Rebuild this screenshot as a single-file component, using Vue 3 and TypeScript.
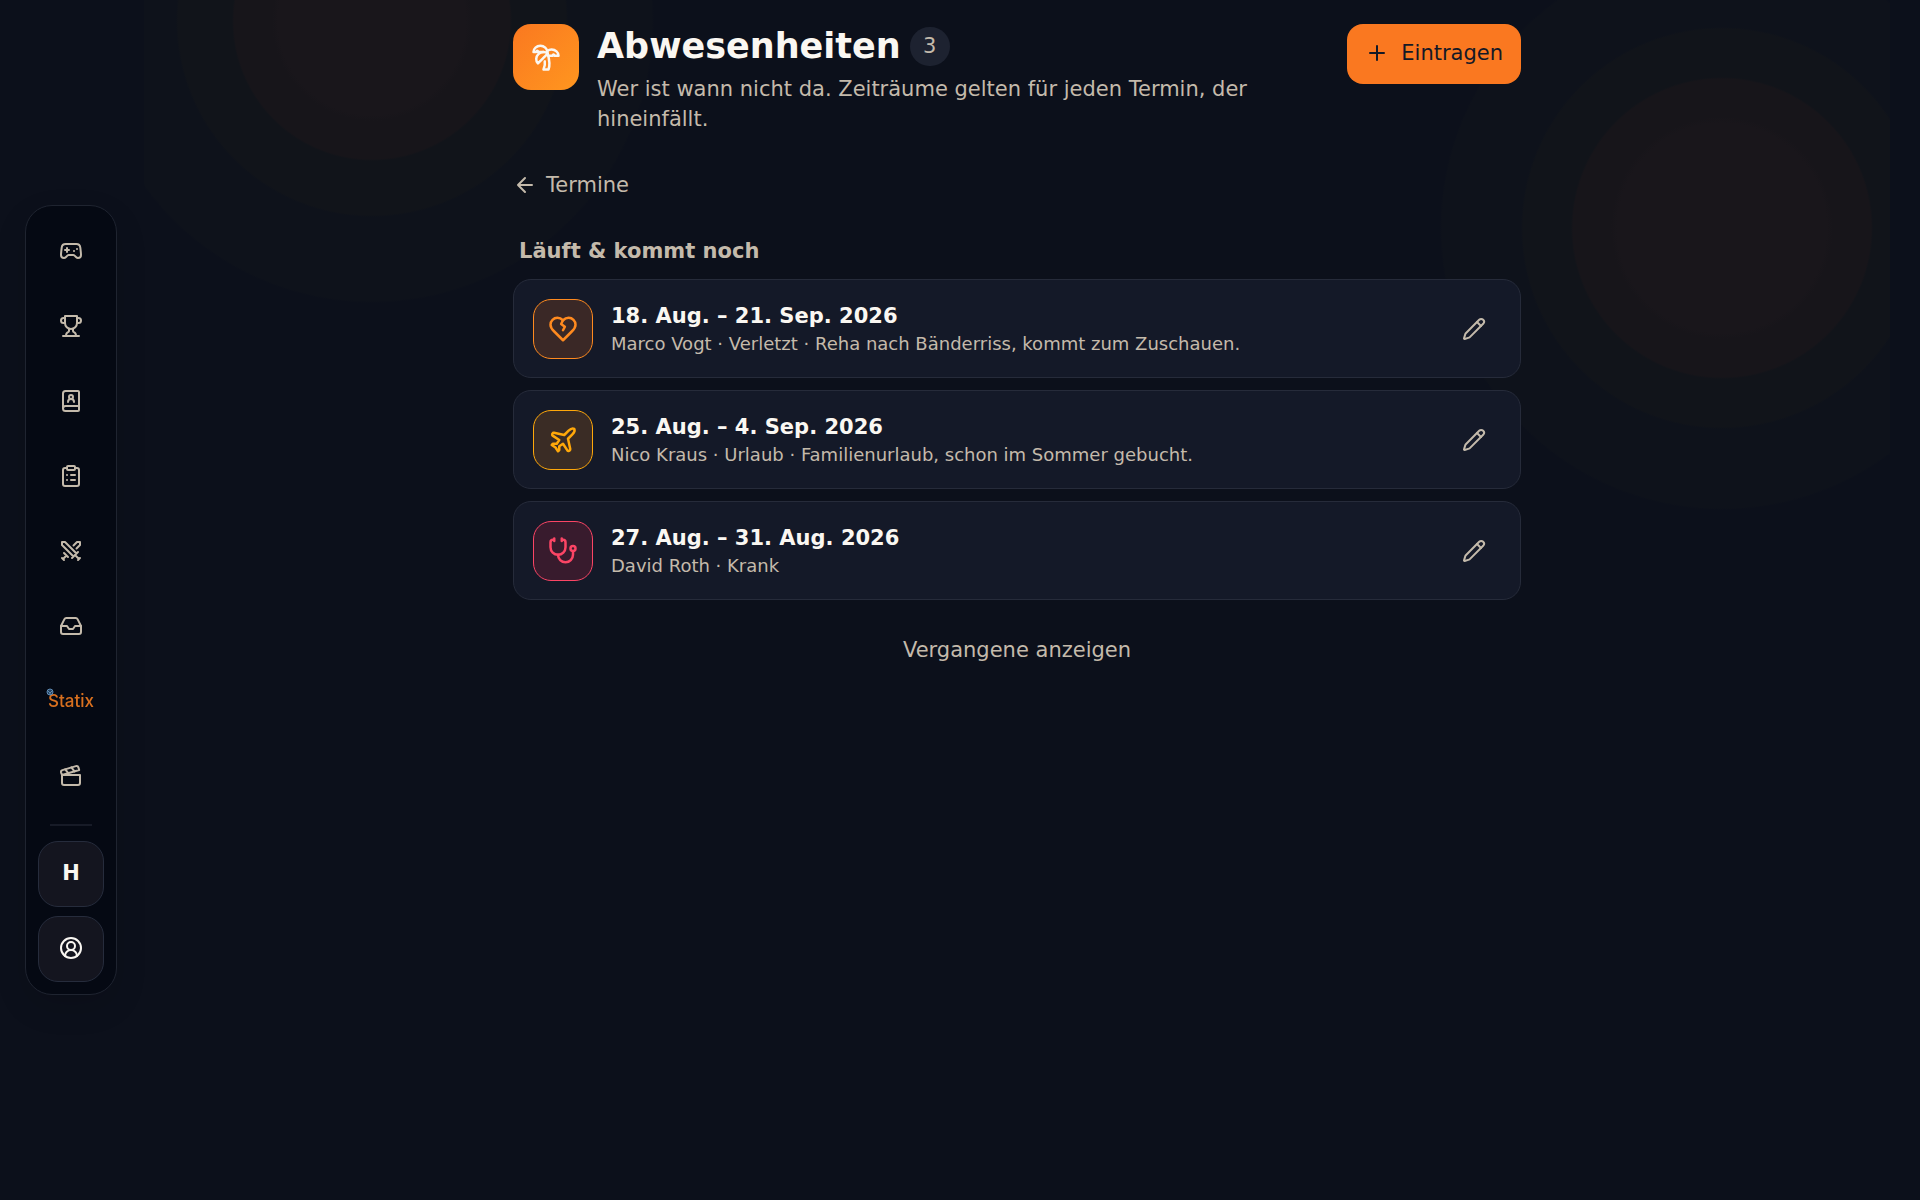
<script setup lang="ts">
import { ref } from 'vue'

interface Icon {
  d: string[]
}

interface NavItem {
  label: string
  icon?: Icon
}

interface Absence {
  id: number
  range: string
  detail: string
  kind: 'injury' | 'vacation' | 'sick'
}

const navItems: NavItem[] = [
  {
    label: 'Spiele',
    icon: {
      d: [
        'M6 11h4M8 9v4M15 12h.01M18 10h.01',
        'M17.32 5H6.68a4 4 0 0 0-3.978 3.59c-.006.052-.01.101-.017.152C2.604 9.416 2 14.456 2 16a3 3 0 0 0 3 3c1 0 1.5-.5 2-1l1.414-1.414A2 2 0 0 1 9.828 16h4.344a2 2 0 0 1 1.414.586L17 18c.5.5 1 1 2 1a3 3 0 0 0 3-3c0-1.545-.604-6.584-.685-7.258-.007-.05-.011-.1-.017-.151A4 4 0 0 0 17.32 5z',
      ],
    },
  },
  {
    label: 'Turniere',
    icon: {
      d: [
        'M6 9H4.5a2.5 2.5 0 0 1 0-5H6M18 9h1.5a2.5 2.5 0 0 0 0-5H18M4 22h16',
        'M10 14.66V17c0 .55-.47.98-.97 1.21C7.85 18.75 7 20.24 7 22M14 14.66V17c0 .55.47.98.97 1.21C16.15 18.75 17 20.24 17 22',
        'M18 2H6v7a6 6 0 0 0 12 0V2Z',
      ],
    },
  },
  {
    label: 'Kader',
    icon: {
      d: [
        'M15 13a3 3 0 1 0-6 0',
        'M4 19.5v-15A2.5 2.5 0 0 1 6.5 2H19a1 1 0 0 1 1 1v18a1 1 0 0 1-1 1H6.5a1 1 0 0 1 0-5H20',
        'M14 8a2 2 0 1 1-4 0 2 2 0 0 1 4 0z',
      ],
    },
  },
  {
    label: 'Aufgaben',
    icon: {
      d: [
        'M9 2h6a1 1 0 0 1 1 1v2a1 1 0 0 1-1 1H9a1 1 0 0 1-1-1V3a1 1 0 0 1 1-1z',
        'M16 4h2a2 2 0 0 1 2 2v14a2 2 0 0 1-2 2H6a2 2 0 0 1-2-2V6a2 2 0 0 1 2-2h2',
        'M12 11h4M12 16h4M8 11h.01M8 16h.01',
      ],
    },
  },
  {
    label: 'Duelle',
    icon: {
      d: [
        'M14.5 17.5 3 6V3h3l11.5 11.5zM13 19l6-6M16 16l4 4M19 21l2-2',
        'M14.5 6.5 18 3h3v3l-3.5 3.5M5 14l4 4M7 17l-3 3M3 19l2 2',
      ],
    },
  },
  {
    label: 'Posteingang',
    icon: {
      d: [
        'M22 12h-6l-2 3h-4l-2-3H2',
        'M5.45 5.11 2 12v6a2 2 0 0 0 2 2h16a2 2 0 0 0 2-2v-6l-3.45-6.89A2 2 0 0 0 16.76 4H7.24a2 2 0 0 0-1.79 1.11z',
      ],
    },
  },
  { label: 'Statix' },
  {
    label: 'Videos',
    icon: {
      d: [
        'M20.2 6 3 11l-.9-2.4c-.3-1.1.3-2.2 1.3-2.5l13.5-4c1.1-.3 2.2.3 2.5 1.3Z',
        'm6.2 5.3 3.1 3.9M12.4 3.4l3.1 4M3 11h18v8a2 2 0 0 1-2 2H5a2 2 0 0 1-2-2Z',
      ],
    },
  },
]

const absences = ref<Absence[]>([
  {
    id: 1,
    range: '18. Aug. – 21. Sep. 2026',
    detail: 'Marco Vogt · Verletzt · Reha nach Bänderriss, kommt zum Zuschauen.',
    kind: 'injury',
  },
  {
    id: 2,
    range: '25. Aug. – 4. Sep. 2026',
    detail: 'Nico Kraus · Urlaub · Familienurlaub, schon im Sommer gebucht.',
    kind: 'vacation',
  },
  { id: 3, range: '27. Aug. – 31. Aug. 2026', detail: 'David Roth · Krank', kind: 'sick' },
])

const kindIcons: Record<Absence['kind'], string[]> = {
  injury: [
    'M19 14c1.49-1.46 3-3.21 3-5.5A5.5 5.5 0 0 0 16.5 3c-1.76 0-3 .5-4.5 2-1.5-1.5-2.74-2-4.5-2A5.5 5.5 0 0 0 2 8.5c0 2.3 1.5 4.05 3 5.5l7 7Z',
    'm12 5-1.5 3 3 2.2L12 13',
  ],
  vacation: [
    'M17.8 19.2 16 11l3.5-3.5C21 6 21.5 4 21 3c-1-.5-3 0-4.5 1.5L13 8 4.8 6.2c-.5-.1-.9.1-1.1.5l-.3.5c-.2.5-.1 1 .3 1.3L9 12l-2 3H4l-1 1 3 2 2 3 1-1v-3l3-2 3.5 5.3c.3.4.8.5 1.3.3l.5-.2c.4-.3.6-.7.5-1.2z',
  ],
  sick: [
    'M11 2v2M5 2v2M5 3H4a2 2 0 0 0-2 2v4a6 6 0 0 0 12 0V5a2 2 0 0 0-2-2h-1',
    'M8 15a6 6 0 0 0 12 0v-3',
    'M22 10a2 2 0 1 1-4 0 2 2 0 0 1 4 0z',
  ],
}
</script>

<template>
  <div class="app">
    <nav class="rail" aria-label="Hauptnavigation">
      <a v-for="item in navItems" :key="item.label" class="rail-link" href="#" :aria-label="item.label">
        <svg v-if="item.icon" class="icon" viewBox="0 0 24 24" aria-hidden="true">
          <path v-for="d in item.icon.d" :key="d" :d="d" />
        </svg>
        <span v-else class="statix">
          Statix
          <svg class="statix-ball" viewBox="0 0 8 8" aria-hidden="true">
            <circle cx="4" cy="4" r="3" />
            <path d="M2 3l2 2 2-2M4 5v2" />
          </svg>
        </span>
      </a>
      <hr class="rail-line" />
      <button class="rail-button" type="button">H</button>
      <button class="rail-button" type="button" aria-label="Profil">
        <svg class="icon" viewBox="0 0 24 24" aria-hidden="true">
          <path d="M18 20a6 6 0 0 0-12 0" />
          <circle cx="12" cy="10" r="4" />
          <circle cx="12" cy="12" r="10" />
        </svg>
      </button>
    </nav>

    <main class="content">
      <header class="head">
        <div class="head-icon">
          <svg class="icon large" viewBox="0 0 24 24" aria-hidden="true">
            <path d="M13 8c0-2.76-2.46-5-5.5-5S2 5.24 2 8h2l1-1 1 1h4" />
            <path d="M13 7.14A5.82 5.82 0 0 1 16.5 6c3.04 0 5.5 2.24 5.5 5h-3l-1-1-1 1h-3" />
            <path d="M5.89 9.71c-2.15 2.15-2.3 5.47-.35 7.43l4.24-4.25.7-.7.71-.71 2.12-2.12c-1.95-1.96-5.27-1.8-7.42.35" />
            <path d="M11 15.5c.5 2.5-.17 4.5-1 6.5h4c2-5.5-.5-12-1-14" />
          </svg>
        </div>
        <div class="head-text">
          <div class="title-row">
            <h1>Abwesenheiten</h1>
            <span class="count">{{ absences.length }}</span>
          </div>
          <p>Wer ist wann nicht da. Zeiträume gelten für jeden Termin, der hineinfällt.</p>
        </div>
        <button class="add" type="button">
          <svg class="icon" viewBox="0 0 24 24" aria-hidden="true"><path d="M5 12h14M12 5v14" /></svg>
          Eintragen
        </button>
      </header>

      <a class="back" href="#">
        <svg class="icon" viewBox="0 0 24 24" aria-hidden="true"><path d="m12 19-7-7 7-7M19 12H5" /></svg>
        Termine
      </a>

      <section>
        <h2>Läuft &amp; kommt noch</h2>
        <ul class="list">
          <li v-for="a in absences" :key="a.id" class="card">
            <span class="kind" :class="a.kind">
              <svg class="icon large" viewBox="0 0 24 24" aria-hidden="true">
                <path v-for="d in kindIcons[a.kind]" :key="d" :d="d" />
              </svg>
            </span>
            <div class="card-text">
              <h3>{{ a.range }}</h3>
              <p>{{ a.detail }}</p>
            </div>
            <button class="edit" type="button" aria-label="Bearbeiten">
              <svg class="icon" viewBox="0 0 24 24" aria-hidden="true">
                <path d="M21.174 6.812a1 1 0 0 0-3.986-3.987L3.842 16.174a2 2 0 0 0-.5.83l-1.321 4.352a.5.5 0 0 0 .623.622l4.353-1.32a2 2 0 0 0 .83-.497z" />
                <path d="m15 5 4 4" />
              </svg>
            </button>
          </li>
        </ul>
      </section>

      <button class="past" type="button">Vergangene anzeigen</button>
    </main>
  </div>
</template>

<style>
body {
  background: #0c101b;
}
</style>

<style scoped>
.app {
  box-sizing: border-box;
  min-height: 100vh;
  padding: 24px 24px 24px 138px;
  background:
    radial-gradient(circle at 228px 21px, #19161b 94px, #17151a 100px 138px, #11141a 140px 194px, #0e121b 196px 280px, transparent 282px) 144px 0 / 600px 400px no-repeat,
    radial-gradient(circle at 432px 228px, #19161b 105px, #17151a 111px 149px, #11141a 151px 199px, #0e121b 201px 280px, transparent 282px) right 30px top 0 / 600px 600px no-repeat,
    #0c101b;
  color: #faf7f2;
  font-family: "DejaVu Sans", sans-serif;
  font-size: 21px;
  line-height: 30px;
}

h1,
h2,
h3,
p,
ul {
  margin: 0;
  padding: 0;
}

button {
  font: inherit;
  cursor: pointer;
}

a {
  color: inherit;
  text-decoration: none;
}

.icon {
  flex: none;
  width: 24px;
  height: 24px;
  fill: none;
  stroke: currentColor;
  stroke-width: 2;
  stroke-linecap: round;
  stroke-linejoin: round;
}

.icon.large {
  width: 30px;
  height: 30px;
}

.rail {
  position: fixed;
  top: 50%;
  left: 25px;
  transform: translateY(-50%);
  display: flex;
  flex-direction: column;
  align-items: center;
  gap: 9px;
  padding: 12px;
  border: 1px solid #1f2430;
  border-radius: 27px;
  background: #050913;
  box-shadow: 0 12px 32px rgba(0, 0, 0, 0.12);
}

.rail-link,
.rail-button {
  box-sizing: border-box;
  display: flex;
  align-items: center;
  justify-content: center;
  width: 66px;
  height: 66px;
  border-radius: 20px;
}

.rail-link {
  color: #c4baab;
}

.rail-button {
  padding: 0 0 2px;
  border: 1px solid #262c3c;
  background: #14151f;
  color: #faf7f2;
  font-size: 21px;
  font-weight: 700;
}

.rail-line {
  width: 42px;
  height: 2px;
  margin: 6px 0;
  border: 0;
  background: #171b27;
}

.statix {
  position: relative;
  color: #d9701f;
  font-family: Inter, sans-serif;
  font-size: 17px;
  font-weight: 500;
  line-height: 20px;
}

.statix-ball {
  position: absolute;
  top: -3px;
  left: -2px;
  width: 8px;
  height: 8px;
  fill: #24425f;
  stroke: #5f8bb5;
}

.content {
  display: flex;
  flex-direction: column;
  gap: 24px;
  max-width: 1008px;
  margin: 0 auto;
}

.head {
  display: flex;
  align-items: flex-start;
  gap: 18px;
}

.head-icon {
  display: flex;
  flex: none;
  align-items: center;
  justify-content: center;
  width: 66px;
  height: 66px;
  border-radius: 18px;
  background: linear-gradient(135deg, #fa7820, #ff961f);
}

.head-text {
  flex: 1;
  min-width: 0;
}

.title-row {
  display: flex;
  align-items: center;
  gap: 9px;
  margin-bottom: 5px;
}

h1 {
  font-size: 35px;
  font-weight: 700;
  line-height: 45px;
}

.count {
  box-sizing: border-box;
  min-width: 40px;
  padding: 4px 12px 5px;
  border-radius: 20px;
  background: #1d2230;
  color: #c4baab;
  text-align: center;
}

.head-text p {
  color: #c4baab;
}

.add {
  display: flex;
  flex: none;
  align-items: center;
  gap: 12px;
  height: 60px;
  padding: 0 18px 2px;
  border: 0;
  border-radius: 16px;
  background: #fa7820;
  color: #141926;
}

.back {
  display: flex;
  align-items: center;
  align-self: flex-start;
  gap: 9px;
  height: 54px;
  color: #c4baab;
}

h2 {
  margin: 0 6px 13px;
  color: #c4baab;
  font-size: 21px;
  font-weight: 700;
}

.list {
  display: flex;
  flex-direction: column;
  gap: 12px;
  list-style: none;
}

.card {
  box-sizing: border-box;
  display: flex;
  align-items: center;
  gap: 18px;
  min-height: 99px;
  padding: 18px 19px;
  border: 1px solid #262b3a;
  border-radius: 18px;
  background: #141928;
}

.kind {
  box-sizing: border-box;
  display: flex;
  flex: none;
  align-items: center;
  justify-content: center;
  width: 60px;
  height: 60px;
  border: 1px solid currentColor;
  border-radius: 18px;
}

.injury {
  background: #3a2826;
  color: #ff8a1f;
}

.vacation {
  background: #3a2c25;
  color: #ffa80a;
}

.sick {
  background: #381b2d;
  color: #fb4565;
}

.card-text {
  flex: 1;
  min-width: 0;
}

h3 {
  font-size: 21px;
  font-weight: 700;
  line-height: 29px;
}

.card-text p {
  color: #c4baab;
  font-size: 18px;
  line-height: 25px;
}

.edit {
  display: flex;
  flex: none;
  align-items: center;
  justify-content: center;
  width: 54px;
  height: 54px;
  padding: 0;
  border: 0;
  background: none;
  color: #c4baab;
}

.past {
  align-self: center;
  height: 52px;
  padding: 0 18px;
  border: 0;
  background: none;
  color: #c4baab;
}
</style>
